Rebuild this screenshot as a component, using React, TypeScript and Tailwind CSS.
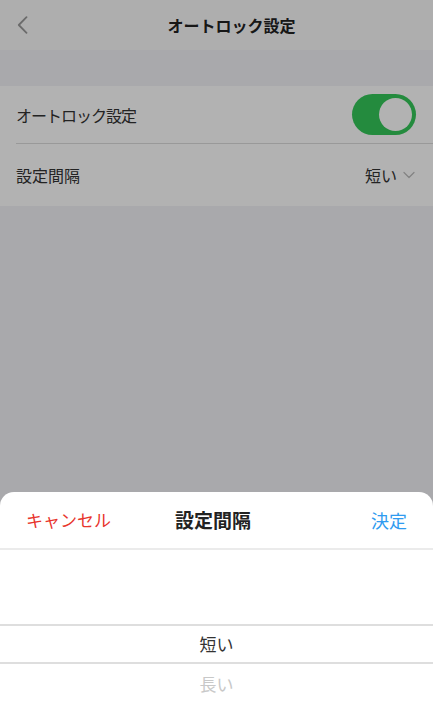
import React from "react";

const font = { fontFamily: '"Noto Sans CJK JP", "Noto Sans", sans-serif' };

export default function App() {
  return (
    <div className="relative w-[433px] h-[705px] overflow-hidden bg-[#f2f2f7]" style={font}>
      {/* page */}
      <div className="flex flex-col">
        <div className="h-[50px] bg-[#fafafa] flex items-center">
          <div className="w-[50px] pl-[17px] flex items-center">
            <svg width="11" height="18" viewBox="0 0 11 18" fill="none">
              <path d="M9.5 1.2 L1.8 9 L9.5 16.8" stroke="#9a9a9a" strokeWidth="1.8" strokeLinecap="round" strokeLinejoin="round" />
            </svg>
          </div>
          <div className="flex-1 text-center text-[16px] font-bold text-[#222] pr-[20px] leading-none">
            オートロック設定
          </div>
        </div>
        <div className="h-[36px]" />
        <div className="bg-white flex flex-col">
          <div className="h-[58px] ml-[16px] pr-[17px] flex items-center justify-between border-b border-[#dcdcdc]">
            <span className="text-[16px] text-[#333] tracking-[-1px]">オートロック設定</span>
            <div className="w-[64px] h-[41px] rounded-full bg-[#34c759] flex items-center justify-end pr-[4px]">
              <div className="w-[33px] h-[33px] rounded-full bg-white" />
            </div>
          </div>
          <div className="h-[62px] ml-[16px] pr-[18px] flex items-center justify-between">
            <span className="text-[16px] text-[#333]">設定間隔</span>
            <div className="flex items-center gap-[6px]">
              <span className="text-[16px] text-[#333]">短い</span>
              <svg width="12" height="8" viewBox="0 0 12 8" fill="none">
                <path d="M1 1.5 L6 6.5 L11 1.5" stroke="#bdbdbd" strokeWidth="1.3" strokeLinecap="round" strokeLinejoin="round" />
              </svg>
            </div>
          </div>
        </div>
      </div>

      {/* overlay */}
      <div className="absolute inset-0 bg-black/30" />

      {/* bottom sheet */}
      <div className="absolute left-0 right-0 bottom-0 h-[213px] bg-white rounded-t-[14px] flex flex-col">
        <div className="h-[58px] flex items-center justify-between px-[26px] border-b-2 border-[#ebebeb]">
          <span className="text-[17px] text-[#e8342c] w-[90px]">キャンセル</span>
          <span className="text-[19px] font-bold text-[#222]">設定間隔</span>
          <span className="text-[18px] text-[#2f9bf0] w-[97px] text-right">決定</span>
        </div>
        <div className="h-[74px]" />
        <div className="h-[40px] border-y-2 border-[#dedede] flex items-center justify-center">
          <span className="text-[17px] text-[#333]">短い</span>
        </div>
        <div className="h-[40px] flex items-center justify-center">
          <span className="text-[17px] text-[#c8c8c8]">長い</span>
        </div>
      </div>
    </div>
  );
}
